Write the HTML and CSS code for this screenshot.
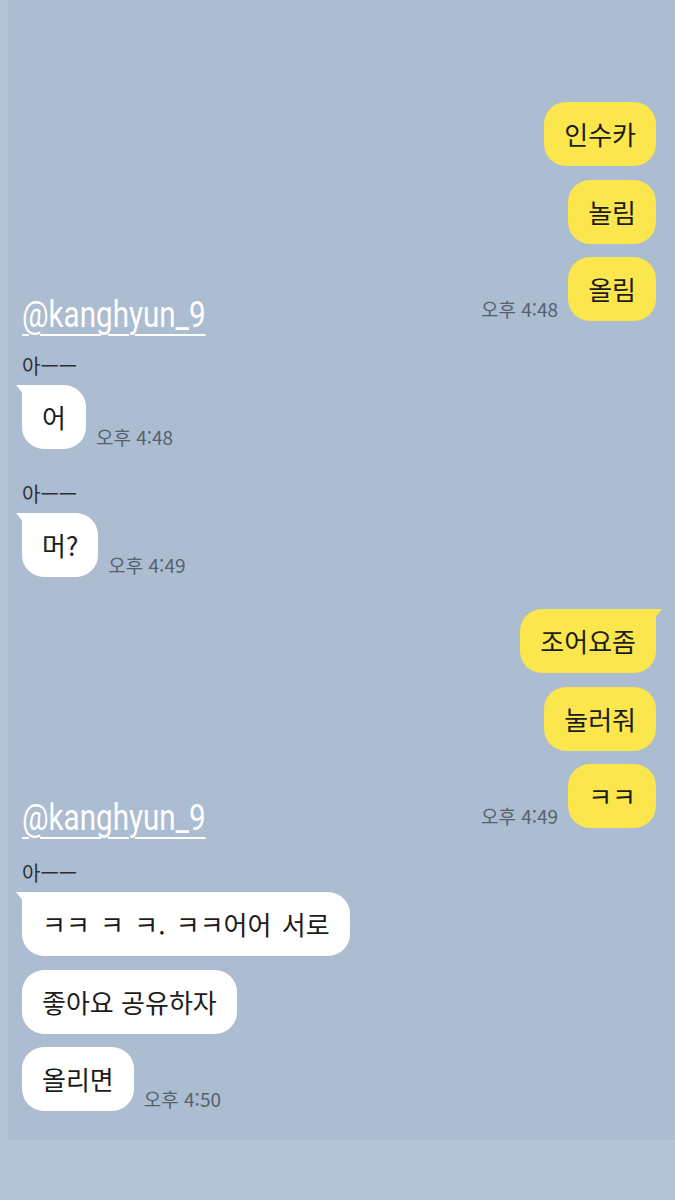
FILE: index.html
```html
<!DOCTYPE html>
<html lang="ko">
<head>
    <meta charset="UTF-8">
    <meta name="viewport" content="width=device-width, initial-scale=1.0">
    <title>채팅</title>
    <link rel="stylesheet" href="styles.css">
</head>
<body>

    <div class="chat">

        <!-- 내 메시지 1 -->
        <div class="group mine">
            <div class="row"><div class="bubble">인수카</div></div>
            <div class="row"><div class="bubble">놀림</div></div>
            <div class="row"><span class="time">오후 4:48</span><div class="bubble">올림</div></div>
        </div>

        <a class="mention m1">@kanghyun_9</a>

        <div class="group">
            <div class="name">아ㅡㅡ</div>
            <div class="row"><div class="bubble tail">어</div><span class="time">오후 4:48</span></div>
        </div>

        <div class="group">
            <div class="name">아ㅡㅡ</div>
            <div class="row"><div class="bubble tail">머?</div><span class="time">오후 4:49</span></div>
        </div>

        <!-- 내 메시지 2 -->
        <div class="group mine">
            <div class="row"><div class="bubble tail">조어요좀</div></div>
            <div class="row"><div class="bubble">눌러줘</div></div>
            <div class="row"><span class="time">오후 4:49</span><div class="bubble">ㅋㅋ</div></div>
        </div>

        <a class="mention m2">@kanghyun_9</a>

        <div class="group">
            <div class="name">아ㅡㅡ</div>
            <div class="row"><div class="bubble tail wide">ㅋㅋ ㅋ ㅋ. ㅋㅋ어어 서로</div></div>
            <div class="row"><div class="bubble">좋아요 공유하자</div></div>
            <div class="row"><div class="bubble">올리면</div><span class="time">오후 4:50</span></div>
        </div>

    </div>

</body>
</html>
```

FILE: styles.css
```css
/* fond type KakaoTalk */
body {
    margin: 0;
    background-color: #b3c2d4;
    font-family: "Noto Sans CJK KR", "Noto Sans", sans-serif;
    color: #1c1c1c;
}
.chat {
    position: relative;
    margin-left: 8px;
    height: 1140px;
    box-sizing: border-box;
    padding: 70px 19px 0 14px;
    background-color: #acbdd1;
}
/* groupes de messages */
.group {
    display: flex;
    flex-direction: column;
    gap: 13.5px;
    margin-top: 32px;
}
.group.mine {
    align-items: flex-end;
}
.row {
    display: flex;
    align-items: flex-end;
    gap: 10px;
}
.name {
    font-size: 20px;
    line-height: 26px;
    color: #2c2f33;
    margin-bottom: -7.5px;
}
/* bulles */
.bubble {
    position: relative;
    height: 64px;
    line-height: 64px;
    padding: 0 20px;
    font-size: 26px;
    background-color: #fff;
    border-radius: 22px;
    white-space: nowrap;
}
.mine .bubble {
    background-color: #fbe64d;
}
.bubble.wide {
    word-spacing: 3px;
}
.bubble.tail {
    border-top-left-radius: 6px;
}
.bubble.tail::before {
    content: "";
    position: absolute;
    top: 0;
    left: -6px;
    width: 14px;
    height: 16px;
    background-color: inherit;
    clip-path: polygon(0 0, 100% 0, 100% 100%, 55% 60%);
}
.mine .bubble.tail {
    border-top-left-radius: 22px;
    border-top-right-radius: 6px;
}
.mine .bubble.tail::before {
    left: auto;
    right: -6px;
    clip-path: polygon(0 0, 100% 0, 45% 60%, 0 100%);
}
.time {
    font-size: 19px;
    line-height: 22px;
    color: #56616f;
    margin-bottom: 1px;
    white-space: nowrap;
}
/* sticker mention */
.mention {
    position: absolute;
    left: 14px;
    font-family: Roboto, "Liberation Sans", sans-serif;
    font-size: 37px;
    line-height: 42px;
    color: #fff;
    text-decoration: underline;
    text-decoration-thickness: 2px;
    text-underline-offset: 7px;
    transform: scaleX(0.8);
    transform-origin: left top;
}
.m1 {
    top: 294px;
}
.m2 {
    top: 797px;
}
```
